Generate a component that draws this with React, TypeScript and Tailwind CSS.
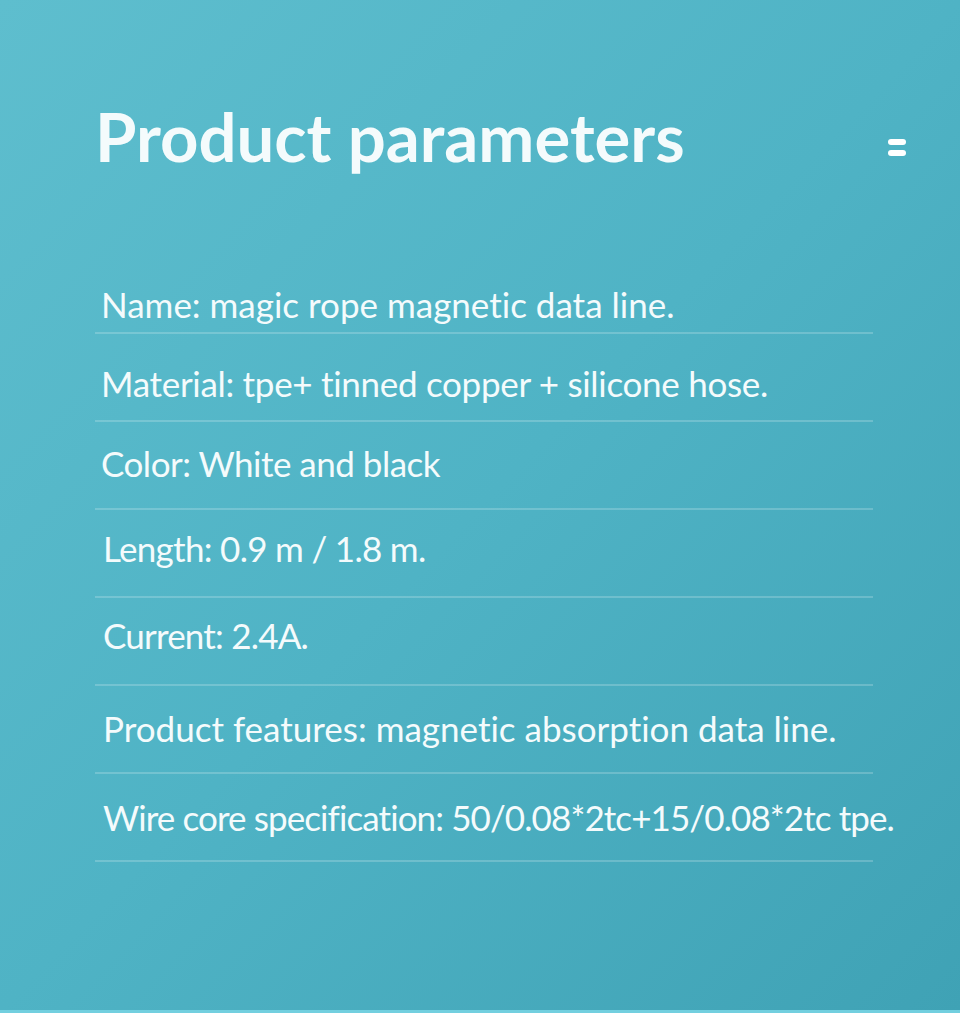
export default function App() {
  const rows = [
    { text: 'Name: magic rope magnetic data line.', pad: 'pt-[38px] pl-[6px]' },
    { text: 'Material: tpe+ tinned copper + silicone hose.', pad: 'pt-[29px] pl-[6px] tracking-[-0.3px]' },
    { text: 'Color: White and black', pad: 'pt-[21px] pl-[6px] tracking-[-0.5px]' },
    { text: 'Length: 0.9 m / 1.8 m.', pad: 'pt-[18px] pl-[8px] tracking-[-0.7px]' },
    { text: 'Current: 2.4A.', pad: 'pt-[17px] pl-[8px] tracking-[-0.8px]' },
    { text: 'Product features: magnetic absorption data line.', pad: 'pt-[22px] pl-[8px]' },
    { text: 'Wire core specification: 50/0.08*2tc+15/0.08*2tc tpe.', pad: 'pt-[23px] pl-[8px] tracking-[-0.9px]' },
  ];

  return (
    <div
      className="relative h-[1013px] w-[960px] overflow-hidden border-b-[3px] border-[#72cfdf] bg-gradient-to-br from-[#5ebece] via-[#4fb3c5] to-[#3fa2b5] font-['Lato','Liberation_Sans',sans-serif] text-[#f4fbfc] [font-variant-ligatures:none]"
    >
      {/* header */}
      <div className="flex items-center justify-between pl-[95px] pr-[54px] pt-[100px]">
        <h1 className="text-[67px] font-bold leading-[72px]">Product parameters</h1>
        <div className="mt-[22px] flex flex-col gap-[5px]">
          <span className="block h-[6px] w-[18px] rounded-full bg-white" />
          <span className="block h-[6px] w-[18px] rounded-full bg-white" />
        </div>
      </div>

      {/* parameter list */}
      <div className="ml-[95px] mt-[74px] w-[778px]">
        {rows.map(row => (
          <div key={row.text} className="flex h-[88px] flex-col border-b-2 border-white/20">
            <div className={`whitespace-nowrap text-[35px] leading-[40px] ${row.pad}`}>{row.text}</div>
          </div>
        ))}
      </div>
    </div>
  );
}
